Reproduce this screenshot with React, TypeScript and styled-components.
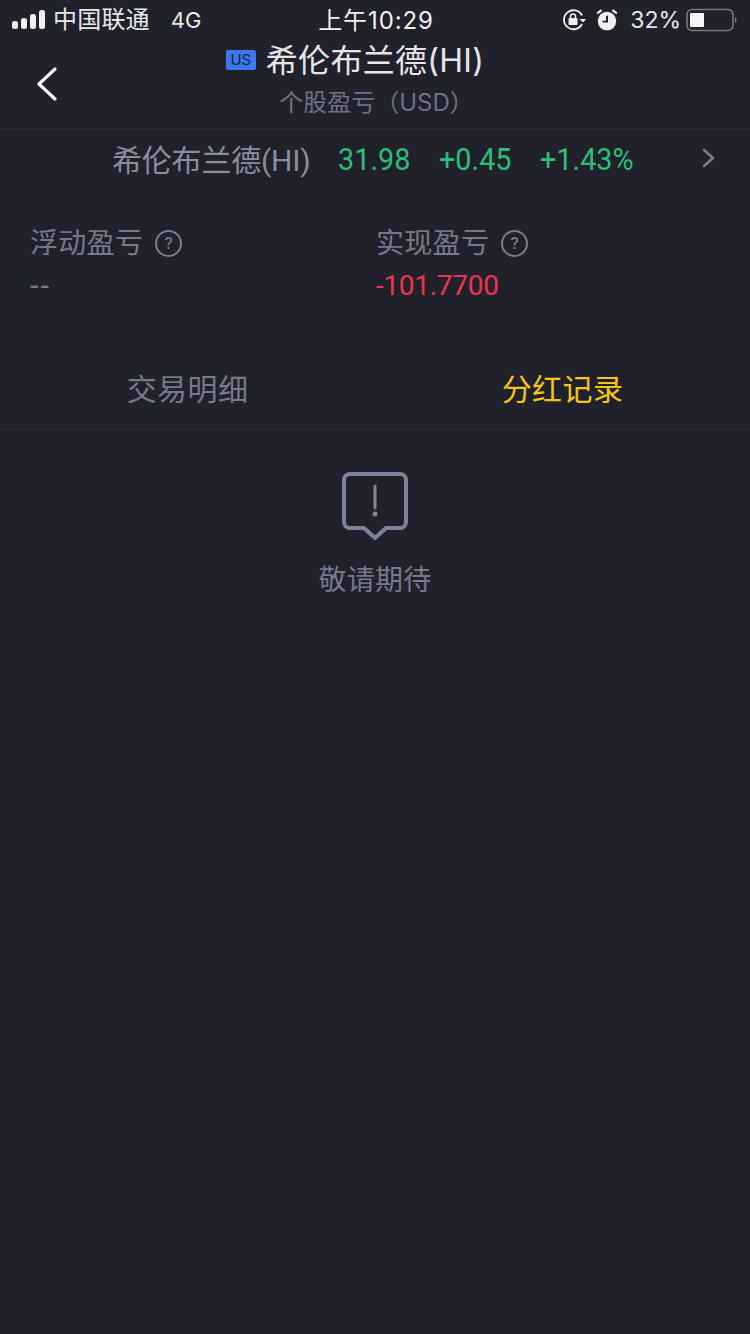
import { createGlobalStyle, styled } from "styled-components";

const GlobalStyle = createGlobalStyle`
  html, body {
    margin: 0;
    padding: 0;
    background: #20212b;
  }
  body {
    font-family: "Inter", "Noto Sans CJK SC", sans-serif;
  }
`;

const Wrapper = styled.div`
  width: 750px;
  height: 1334px;
  overflow: hidden;
  background: #20212b;
  font-family: "Inter", "Noto Sans CJK SC", sans-serif;
`;

const StatusBar = styled.div`
  height: 40px;
  display: grid;
  grid-template-columns: 1fr auto 1fr;
  align-items: center;
  padding: 0 12px 0 12px;
  color: #e8e8ec;
  font-size: 23px;
`;
const StatusLeft = styled.div`
  display: flex;
  align-items: center;
  gap: 8px;
`;
const Carrier = styled.span`
  font-size: 24px;
  line-height: 40px;
  letter-spacing: 0.2px;
`;
const Network = styled.span`
  margin-left: 13px;
  font-size: 22px;
`;
const Clock = styled.span`
  margin: 2px 0 0 2px;
  font-size: 24px;
  line-height: 36px;
  letter-spacing: 0.9px;
  color: #f0f0f3;
`;
const StatusRight = styled.div`
  display: flex;
  align-items: center;
  justify-content: flex-end;
  gap: 11px;
`;
const AlarmIcon = styled.svg`
  margin-left: -2px;
`;
const Percent = styled.span`
  font-size: 23px;
  margin-right: -6px;
`;

const Header = styled.div`
  position: relative;
  height: 88px;
  display: flex;
  flex-direction: column;
  align-items: center;
  border-bottom: 1px solid #2b2c36;
`;
const BackButton = styled.div`
  position: absolute;
  left: 36px;
  top: 27px;
  display: flex;
`;
const TitleRow = styled.div`
  display: flex;
  align-items: center;
  gap: 10px;
  height: 36px;
  margin-right: 40px;
`;
const MarketTag = styled.span`
  width: 30px;
  height: 20px;
  margin-top: 4px;
  border-radius: 2px;
  background: #3b78f0;
  color: #14213d;
  font-size: 15px;
  line-height: 20px;
  text-align: center;
`;
const Title = styled.h1`
  margin: 0;
  font-size: 32px;
  font-weight: 400;
  letter-spacing: 0.3px;
  color: #e6e6ea;
`;
const Subtitle = styled.div`
  margin-top: 9px;
  padding-left: 3px;
  font-size: 24px;
  line-height: 36px;
  color: #6f7085;
`;

const QuoteRow = styled.div`
  position: relative;
  height: 60px;
  display: flex;
  align-items: center;
  padding-left: 112px;
`;
const QuoteName = styled.span`
  width: 226px;
  margin-bottom: 3px;
  font-family: "Roboto", "Noto Sans CJK SC", sans-serif;
  font-size: 30px;
  letter-spacing: -0.2px;
  color: #8b8c9f;
`;
const QuoteValue = styled.span`
  display: inline-block;
  width: 101px;
  font-family: "Roboto", sans-serif;
  font-size: 31px;
  color: #2cbd78;
  transform: scaleX(0.93);
  transform-origin: left center;
`;
const QuoteArrow = styled.div`
  position: absolute;
  left: 702px;
  top: 19px;
  display: flex;
`;

const Stats = styled.div`
  display: grid;
  grid-template-columns: 346px 1fr;
  height: 134px;
  padding: 34px 0 0 30px;
`;
const Stat = styled.div`
  display: flex;
  flex-direction: column;
`;
const StatLabel = styled.div`
  display: flex;
  align-items: center;
  gap: 12px;
  font-size: 28px;
  line-height: 40px;
  letter-spacing: 0.3px;
  color: #77788c;
`;
const HelpIcon = styled.span`
  width: 23px;
  height: 23px;
  border: 2px solid #7c7d92;
  border-radius: 50%;
  font-family: "Roboto", sans-serif;
  font-size: 17px;
  font-weight: 500;
  line-height: 23px;
  letter-spacing: 0;
  text-align: center;
`;
const StatValue = styled.div<{ $loss?: boolean }>`
  margin-top: 3px;
  font-family: "Roboto", sans-serif;
  font-size: ${(props) => (props.$loss ? "28px" : "31px")};
  line-height: 40px;
  letter-spacing: ${(props) => (props.$loss ? "-0.3px" : "2px")};
  color: ${(props) => (props.$loss ? "#ee3350" : "#77788c")};
`;

const Tabs = styled.div`
  display: grid;
  grid-template-columns: 1fr 1fr;
  height: 72px;
  border-bottom: 1px solid #2b2c36;
`;
const Tab = styled.div<{ $active?: boolean }>`
  font-size: 30px;
  line-height: 64px;
  letter-spacing: 0.4px;
  text-align: center;
  color: ${(props) => (props.$active ? "#f5c518" : "#77788c")};
`;

const Empty = styled.div`
  display: flex;
  flex-direction: column;
  align-items: center;
  padding-top: 41px;
`;
const EmptyText = styled.div`
  margin-top: 19px;
  font-size: 28px;
  line-height: 40px;
  letter-spacing: 0.2px;
  color: #77788c;
`;

function App() {
  return (
    <Wrapper>
      <GlobalStyle />
      <StatusBar>
        <StatusLeft>
          <svg width="33" height="20" viewBox="0 0 33 20" fill="#f0f0f3">
            <rect x="0" y="11" width="6" height="8" rx="2.5" />
            <rect x="9" y="8" width="6" height="11" rx="2.5" />
            <rect x="18" y="4" width="6" height="15" rx="2.5" />
            <rect x="27" y="0" width="6" height="19" rx="2.5" />
          </svg>
          <Carrier>中国联通</Carrier>
          <Network>4G</Network>
        </StatusLeft>
        <Clock>上午10:29</Clock>
        <StatusRight>
          <svg width="24" height="22" viewBox="0 0 24 22" fill="none">
            <path d="M20 6.500A9.500 9.500 0 1 0 20 15" stroke="#f0f0f3" strokeWidth="1.8" />
            <path d="M17.500 10l3.500 3.500L24 10z" fill="#f0f0f3" />
            <rect x="6.500" y="9" width="9" height="7" rx="1" fill="#f0f0f3" />
            <path d="M8.500 9V7.500a2.500 2.500 0 0 1 5 0V9" stroke="#f0f0f3" strokeWidth="1.5" />
          </svg>
          <AlarmIcon width="24" height="24" viewBox="0 0 22 22" fill="none">
            <circle cx="11" cy="12" r="8.500" fill="#f0f0f3" />
            <path d="M11 7v5.500H7" stroke="#20212b" strokeWidth="1.8" />
            <path d="M2 5l4-3M20 5l-4-3" stroke="#f0f0f3" strokeWidth="2" />
          </AlarmIcon>
          <Percent>32%</Percent>
          <svg width="52" height="24" viewBox="0 0 52 24" fill="none">
            <rect x="1" y="1.500" width="46" height="21" rx="5" stroke="#77777c" strokeWidth="1.6" />
            <rect x="4" y="5" width="14" height="14" rx="1" fill="#f5f5f7" />
            <path d="M49 9c2 .5 2 5.500 0 6z" fill="#77777c" />
          </svg>
        </StatusRight>
      </StatusBar>
      <Header>
        <BackButton>
          <svg width="22" height="34" viewBox="0 0 22 34" fill="none">
            <path
              d="M19 2L3 17l16 15"
              stroke="#f2f2f5"
              strokeWidth="3.2"
              strokeLinecap="round"
              strokeLinejoin="round"
            />
          </svg>
        </BackButton>
        <TitleRow>
          <MarketTag>US</MarketTag>
          <Title>希伦布兰德(HI)</Title>
        </TitleRow>
        <Subtitle>个股盈亏（USD）</Subtitle>
      </Header>
      <QuoteRow>
        <QuoteName>希伦布兰德(HI)</QuoteName>
        <QuoteValue>31.98</QuoteValue>
        <QuoteValue>+0.45</QuoteValue>
        <QuoteValue>+1.43%</QuoteValue>
        <QuoteArrow>
          <svg width="13" height="20" viewBox="0 0 13 20" fill="none">
            <path
              d="M2 2l9 8-9 8"
              stroke="#7b7c90"
              strokeWidth="2.4"
              strokeLinecap="round"
              strokeLinejoin="round"
            />
          </svg>
        </QuoteArrow>
      </QuoteRow>
      <Stats>
        <Stat>
          <StatLabel>
            浮动盈亏<HelpIcon>?</HelpIcon>
          </StatLabel>
          <StatValue>--</StatValue>
        </Stat>
        <Stat>
          <StatLabel>
            实现盈亏<HelpIcon>?</HelpIcon>
          </StatLabel>
          <StatValue $loss>-101.7700</StatValue>
        </Stat>
      </Stats>
      <Tabs>
        <Tab>交易明细</Tab>
        <Tab $active>分红记录</Tab>
      </Tabs>
      <Empty>
        <svg width="68" height="70" viewBox="0 0 68 70" fill="none">
          <path
            d="M9 3h50a6 6 0 0 1 6 6v42a6 6 0 0 1-6 6H45l-11 10-11-10H9a6 6 0 0 1-6-6V9a6 6 0 0 1 6-6z"
            stroke="#80819a"
            strokeWidth="4"
            strokeLinejoin="round"
          />
          <path d="M34 15v22" stroke="#80819a" strokeWidth="3" strokeLinecap="round" />
          <circle cx="34" cy="43" r="2.500" fill="#80819a" />
        </svg>
        <EmptyText>敬请期待</EmptyText>
      </Empty>
    </Wrapper>
  );
}
export default App;
